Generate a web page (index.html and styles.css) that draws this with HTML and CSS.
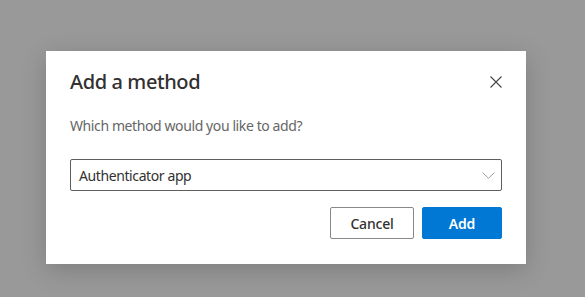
FILE: index.html
```html
<!DOCTYPE html>
<html lang="en">
<head>
    <meta charset="UTF-8">
    <title>Add a method</title>
    <link rel="stylesheet" href="styles.css">
</head>
<body>
    <div class="dialog">
        <div class="dialog-header">
            <h2>Add a method</h2>
            <button class="close-btn" aria-label="Close">
                <svg width="12" height="12" viewBox="0 0 12 12">
                    <path d="M0.5 0.5 L11.5 11.5 M11.5 0.5 L0.5 11.5" stroke="#444" stroke-width="1.1" fill="none"/>
                </svg>
            </button>
        </div>
        <p class="question">Which method would you like to add?</p>
        <div class="select">
            <span>Authenticator app</span>
            <svg width="13" height="7" viewBox="0 0 13 7">
                <path d="M0.5 0.5 L6.5 6.3 L12.5 0.5" stroke="#a0a0a0" stroke-width="1" fill="none"/>
            </svg>
        </div>
        <div class="actions">
            <button class="btn btn-cancel">Cancel</button>
            <button class="btn btn-add">Add</button>
        </div>
    </div>
</body>
</html>
```

FILE: styles.css
```css
body {
    margin: 0;
    height: 297px;
    background: #999999;
    font-family: "Noto Sans", "Open Sans", sans-serif;
    padding: 51px 0 0 46px;
    box-sizing: border-box;
}

.dialog {
    width: 480px;
    height: 213px;
    box-sizing: border-box;
    background: white;
    padding: 17px 24px 24px 24px;
    box-shadow: 0 6px 24px rgba(0, 0, 0, 0.18);
    display: flex;
    flex-direction: column;
}

.dialog-header {
    display: flex;
    justify-content: space-between;
    align-items: center;
}

.dialog-header h2 {
    margin: 0;
    font-size: 20px;
    font-weight: 500;
    letter-spacing: -0.4px;
    color: #323130;
    line-height: 28px;
}

.close-btn {
    background: none;
    border: none;
    padding: 0;
    width: 12px;
    height: 12px;
    display: flex;
    margin-top: -1px;
}

.question {
    margin: 20px 0 0 0;
    font-size: 14px;
    letter-spacing: -0.4px;
    color: #666666;
    line-height: 20px;
}

.select {
    margin-top: 23px;
    height: 32px;
    box-sizing: border-box;
    border: 1px solid #605e5c;
    border-radius: 2px;
    display: flex;
    align-items: center;
    justify-content: space-between;
    padding: 0 6px 0 8px;
    font-size: 14px;
    letter-spacing: -0.4px;
    color: #323130;
}

.actions {
    margin-top: 16px;
    display: flex;
    justify-content: flex-end;
    gap: 8px;
}

.btn {
    height: 32px;
    border-radius: 2px;
    font-family: inherit;
    font-size: 14px;
    font-weight: 500;
    letter-spacing: -0.2px;
    padding: 0;
}

.btn-cancel {
    width: 84px;
    background: white;
    border: 1px solid #8a8886;
    color: #323130;
}

.btn-add {
    width: 80px;
    background: #0078d4;
    border: 1px solid #0078d4;
    color: white;
    font-weight: 600;
}
```
